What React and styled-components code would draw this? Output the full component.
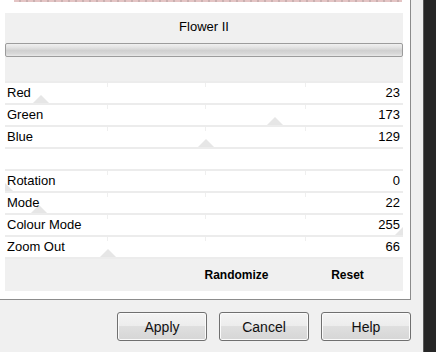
import React from "react";
import styled, { createGlobalStyle } from "styled-components";

const GlobalStyle = createGlobalStyle`
  body {
    margin: 0;
    background: #f0f0f0;
    font-family: "Liberation Sans", Arial, sans-serif;
  }
`;

const Page = styled.div`
  display: flex;
  width: 436px;
  height: 352px;
  overflow: hidden;
  background: #f0f0f0;
`;

const Column = styled.div`
  display: flex;
  flex-direction: column;
  width: 423px;
`;

const Canvas = styled.div`
  display: flex;
  flex-direction: column;
  box-sizing: border-box;
  width: 411px;
  height: 300px;
  padding: 0 7px 0 5px;
  background: #ffffff;
  border-right: 1px solid #8c8c8c;
  border-bottom: 1px solid #8c8c8c;
`;

const Preview = styled.div`
  height: 2px;
  margin: 0 1px 0 9px;
  background: repeating-linear-gradient(
    90deg,
    #e4c4c4 0px,
    #e4c4c4 5px,
    #c9b0b0 5px,
    #c9b0b0 7px
  );
`;

const Header = styled.div`
  display: flex;
  flex-direction: column;
  height: 68px;
  margin-top: 11px;
  background: #f0f0f0;
`;

const Title = styled.div`
  height: 28px;
  line-height: 28px;
  text-align: center;
  font-size: 13px;
  color: #000;
`;

const Bar = styled.div`
  box-sizing: border-box;
  height: 14px;
  margin-top: 2px;
  border: 1px solid #9c9c9c;
  border-radius: 2px;
  background: linear-gradient(
    #f0f0f0 0%,
    #e2e2e2 30%,
    #d0d0d0 55%,
    #d8d8d8 80%,
    #e8e8e8 100%
  );
`;

const Sliders = styled.div`
  border-top: 2px solid #ececec;
`;

const Row = styled.div`
  position: relative;
  display: flex;
  align-items: center;
  justify-content: space-between;
  height: 20px;
  padding: 0 3px 0 2px;
  border-bottom: 2px solid #ececec;
  overflow: hidden;
  font-size: 13px;
  color: #000;
`;

const Label = styled.span`
  position: relative;
  z-index: 1;
  margin-top: -1px;
`;

const Tick = styled.i`
  position: absolute;
  top: 0;
  width: 1px;
  height: 4px;
  background: #efefef;
`;

const Thumb = styled.i`
  position: absolute;
  bottom: 0;
  width: 0;
  height: 0;
  margin-left: -8px;
  border-left: 8px solid transparent;
  border-right: 8px solid transparent;
  border-bottom: 8px solid #e6e6e6;
`;

const Actions = styled.div`
  display: flex;
  justify-content: flex-end;
  height: 32px;
  background: #f0f0f0;
`;

const LinkButton = styled.div`
  width: 111px;
  line-height: 32px;
  text-align: center;
  font-size: 12px;
  font-weight: bold;
  color: #000;
`;

const Buttons = styled.div`
  display: flex;
  justify-content: flex-end;
  gap: 12px;
  padding: 12px 12px 0 0;
`;

const Button = styled.button`
  box-sizing: border-box;
  width: 90px;
  height: 29px;
  padding: 0;
  border: 1px solid #707070;
  border-radius: 3px;
  background: linear-gradient(#f4f4f4 0%, #ececec 50%, #dfdfdf 50%, #d6d6d6 100%);
  box-shadow: inset 0 0 0 1px #fbfbfb;
  font-family: "Liberation Sans", Arial, sans-serif;
  font-size: 14px;
  color: #111;
`;

const Edge = styled.div`
  flex: 1;
  background: #272727;
  border-left: 1px solid #5a5a5a;
`;

const sliders = [
  { name: "Red", value: 23 },
  { name: "Green", value: 173 },
  { name: "Blue", value: 129 },
  null,
  { name: "Rotation", value: 0 },
  { name: "Mode", value: 22 },
  { name: "Colour Mode", value: 255 },
  { name: "Zoom Out", value: 66 },
];

const ticks = [25.6, 50.2, 75.4];

const SliderRow = ({ item }) => {
  if (!item) return <Row />;
  return (
    <Row>
      {ticks.map((t) => (
        <Tick key={t} style={{ left: `${t}%` }} />
      ))}
      <Thumb style={{ left: `${(item.value / 255) * 100}%` }} />
      <Label>{item.name}</Label>
      <Label>{item.value}</Label>
    </Row>
  );
};

const App = () => (
  <Page>
    <GlobalStyle />
    <Column>
      <Canvas>
        <Preview />
        <Header>
          <Title>Flower II</Title>
          <Bar />
        </Header>
        <Sliders>
          {sliders.map((item, idx) => (
            <SliderRow key={idx} item={item} />
          ))}
        </Sliders>
        <Actions>
          <LinkButton>Randomize</LinkButton>
          <LinkButton>Reset</LinkButton>
        </Actions>
      </Canvas>
      <Buttons>
        <Button>Apply</Button>
        <Button>Cancel</Button>
        <Button>Help</Button>
      </Buttons>
    </Column>
    <Edge />
  </Page>
);

export default App;
